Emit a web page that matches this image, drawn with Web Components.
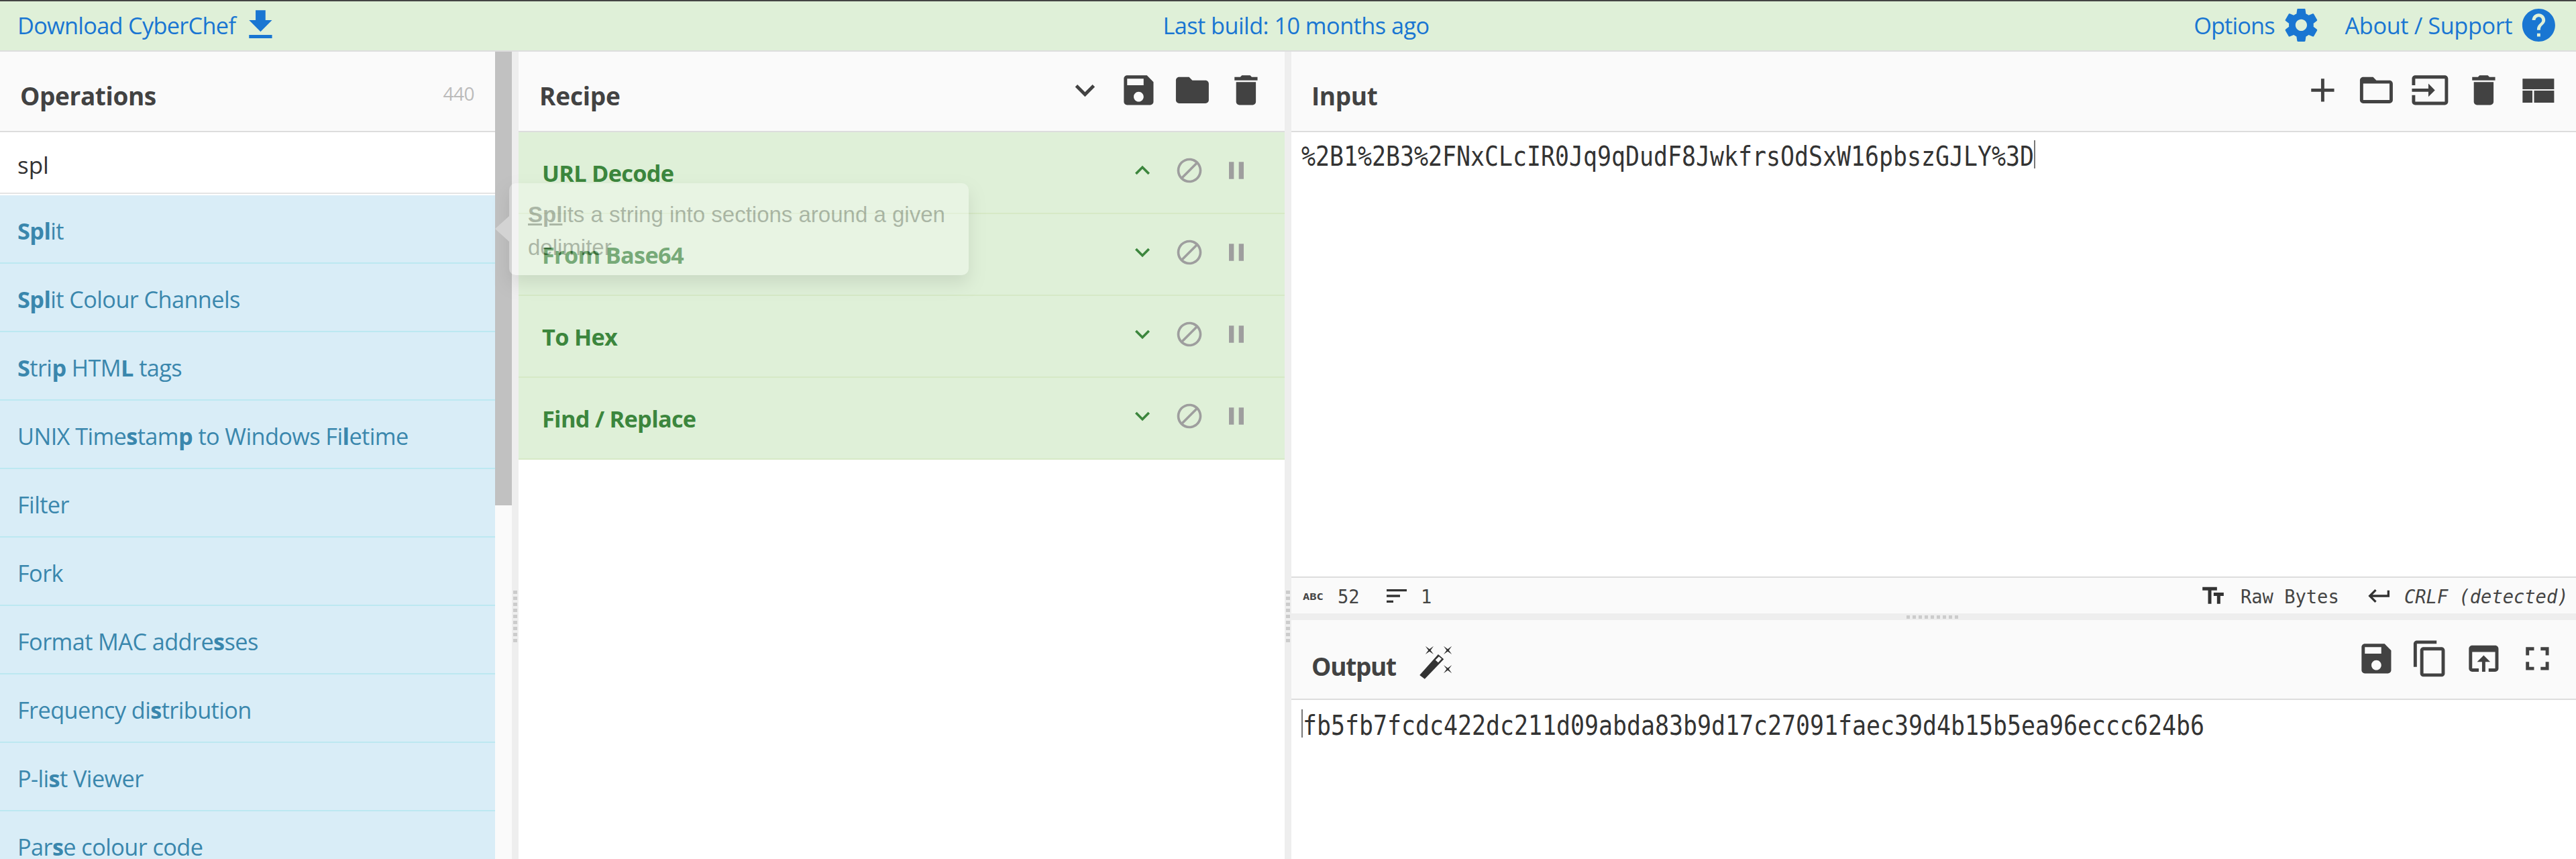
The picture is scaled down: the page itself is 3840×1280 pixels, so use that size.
<!DOCTYPE html>
<html lang="en">
<head>
<meta charset="utf-8">
<title>CyberChef</title>
<style>
  html, body { margin: 0; height: 100%; overflow: hidden; background: #fff; }
  body { font-family: "Open Sans", "Liberation Sans", sans-serif; }
</style>
</head>
<body>
<cc-app></cc-app>

<script>
// material icon paths, 24x24 viewbox
const ICONS = {
  download: "M19 9h-4V3H9v6H5l7 7 7-7zM5 18v2h14v-2H5z",
  settings: "M19.43 12.98c.04-.32.07-.64.07-.98s-.03-.66-.07-.98l2.11-1.65c.19-.15.24-.42.12-.64l-2-3.46c-.12-.22-.39-.3-.61-.22l-2.49 1c-.52-.4-1.08-.73-1.69-.98l-.38-2.65C14.46 2.18 14.25 2 14 2h-4c-.25 0-.46.18-.49.42l-.38 2.65c-.61.25-1.17.59-1.69.98l-2.49-1c-.23-.09-.49 0-.61.22l-2 3.46c-.13.22-.07.49.12.64l2.11 1.65c-.04.32-.07.65-.07.98s.03.66.07.98l-2.11 1.65c-.19.15-.24.42-.12.64l2 3.46c.12.22.39.3.61.22l2.49-1c.52.4 1.08.73 1.69.98l.38 2.65c.03.24.24.42.49.42h4c.25 0 .46-.18.49-.42l.38-2.65c.61-.25 1.17-.59 1.69-.98l2.49 1c.23.09.49 0 .61-.22l2-3.46c.12-.22.07-.49-.12-.64l-2.11-1.65zM12 15.5c-1.93 0-3.5-1.57-3.5-3.5s1.57-3.5 3.5-3.5 3.5 1.57 3.5 3.5-1.57 3.5-3.5 3.5z",
  help: "M12 2C6.48 2 2 6.48 2 12s4.48 10 10 10 10-4.48 10-10S17.52 2 12 2zm1 17h-2v-2h2v2zm2.07-7.75l-.9.92C13.45 12.9 13 13.5 13 15h-2v-.5c0-1.1.45-2.1 1.17-2.83l1.24-1.26c.37-.36.59-.86.59-1.41 0-1.1-.9-2-2-2s-2 .9-2 2H8c0-2.21 1.79-4 4-4s4 1.79 4 4c0 .88-.36 1.68-.93 2.25z",
  down: "M7.41 8.59 12 13.17l4.59-4.58L18 10l-6 6-6-6 1.41-1.41z",
  up: "M7.41 15.41 12 10.83l4.59 4.58L18 14l-6-6-6 6 1.41 1.41z",
  save: "M17 3H5c-1.11 0-2 .9-2 2v14c0 1.1.89 2 2 2h14c1.1 0 2-.9 2-2V7l-4-4zm-5 16c-1.66 0-3-1.34-3-3s1.34-3 3-3 3 1.34 3 3-1.34 3-3 3zm3-10H5V5h10v4z",
  folder: "M10 4H4c-1.1 0-1.99.9-1.99 2L2 18c0 1.1.9 2 2 2h16c1.1 0 2-.9 2-2V8c0-1.1-.9-2-2-2h-8l-2-2z",
  folderOpen: "M20 6h-8l-2-2H4c-1.1 0-1.99.9-1.99 2L2 18c0 1.1.9 2 2 2h16c1.1 0 2-.9 2-2V8c0-1.1-.9-2-2-2zm0 12H4V8h16v10z",
  trash: "M6 19c0 1.1.9 2 2 2h8c1.1 0 2-.9 2-2V7H6v12zM19 4h-3.5l-1-1h-5l-1 1H5v2h14V4z",
  block: "M12 2C6.48 2 2 6.48 2 12s4.48 10 10 10 10-4.48 10-10S17.52 2 12 2zM4 12c0-4.42 3.58-8 8-8 1.85 0 3.55.63 4.9 1.69L5.69 16.9C4.63 15.55 4 13.85 4 12zm8 8c-1.85 0-3.55-.63-4.9-1.69L18.31 7.1C19.37 8.45 20 10.15 20 12c0 4.42-3.58 8-8 8z",
  pause: "M6 19h4V5H6v14zm8-14v14h4V5h-4z",
  add: "M19 13h-6v6h-2v-6H5v-2h6V5h2v6h6v2z",
  input: "M21 3.01H3c-1.1 0-2 .9-2 2V9h2V4.99h18v14.03H3V15H1v4.01c0 1.1.9 1.98 2 1.98h18c1.1 0 2-.88 2-1.98v-14c0-1.11-.9-2-2-2zM11 16l4-4-4-4v3H1v2h10v3z",
  layout: "M3 5h19.2v6.4H3zM3 12.2h6v7.4H3zM10 12.2h12.2v7.4H10z",
  copy: "M16 1H4c-1.1 0-2 .9-2 2v14h2V3h12V1zm3 4H8c-1.1 0-2 .9-2 2v14c0 1.1.9 2 2 2h11c1.1 0 2-.9 2-2V7c0-1.1-.9-2-2-2zm0 16H8V7h11v14z",
  openIn: "M19 4H5c-1.11 0-2 .9-2 2v12c0 1.1.89 2 2 2h4v-2H5V8h14v10h-4v2h4c1.1 0 2-.9 2-2V6c0-1.1-.9-2-2-2zm-7 6l-4 4h3v6h2v-6h3l-4-4z",
  fullscreen: "M7 14H5v5h5v-2H7v-3zm-2-4h2V7h3V5H5v5zm12 7h-3v2h5v-5h-2v3zM14 5v2h3v3h2V5h-5z",
  sort: "M3 18h6v-2H3v2zM3 6v2h18V6H3zm0 7h12v-2H3v2z",
  textFields: "M2.5 4v3h5v12h3V7h5V4h-13zm19 5h-9v3h3v7h3v-7h3V9z",
  enter: "M19 7v4H5.83l3.58-3.59L8 6l-6 6 6 6 1.41-1.41L5.83 13H21V7z",
  // wand with a hollow tip and three sparks, traced from the reference
  wand: "M5.8 21.6 8.9 24 20.5 11.95 17.1 9zM15.4 12.4 17.55 10.3 19.2 11.7 17.1 14zM9.3 4 11.8 5.8 14.3 4 12.5 6.5 14.3 9 11.8 7.2 9.3 9 11.1 6.5zM20.4 4 22.9 5.8 25.4 4 23.6 6.5 25.4 9 22.9 7.2 20.4 9 22.2 6.5zM20.4 15.5 22.9 17.3 25.4 15.5 23.6 18 25.4 20.5 22.9 18.7 20.4 20.5 22.2 18z"
};

class CcIcon extends HTMLElement {
  connectedCallback() {
    const size = this.getAttribute("size") ?? "58.8";
    const d = ICONS[this.getAttribute("name")] ?? "";
    this.attachShadow({ mode: "open" }).innerHTML = `
      <style>
        :host { display: block; flex: none; width: ${size}px; height: ${size}px; color: var(--icon, #424242); }
        svg { display: block; width: 100%; height: 100%; fill: currentColor; overflow: visible; }
      </style>
      <svg viewBox="0 0 24 24" aria-hidden="true"><path d="${d}"/></svg>`;
  }
}
customElements.define("cc-icon", CcIcon);

// the editor font is narrower than anything installed, so squeeze DejaVu to the measured advance
class CcMono extends HTMLElement {
  connectedCallback() {
    const text = this.getAttribute("text") ?? "";
    const adv = +(this.getAttribute("adv") ?? 21);
    const size = +(this.getAttribute("size") ?? 41);
    const sx = adv / (size * 0.602);
    this.attachShadow({ mode: "open" }).innerHTML = `
      <style>
        :host { display: block; flex: none; width: ${text.length * adv}px; height: ${size * 1.2}px; }
        span {
          display: block; width: max-content; white-space: pre;
          font: ${this.hasAttribute("italic") ? "italic" : "normal"} ${this.hasAttribute("bold") ? 700 : 400} ${size}px/1.2 "DejaVu Sans Mono", monospace;
          transform: scaleX(${sx}); transform-origin: 0 0;
        }
      </style>
      <span>${text}</span>`;
  }
}
customElements.define("cc-mono", CcMono);

class CcBanner extends HTMLElement {
  connectedCallback() {
    this.attachShadow({ mode: "open" }).innerHTML = `
      <style>
        :host {
          display: grid; grid-template-columns: 1fr auto 1fr; align-items: center;
          box-sizing: border-box; height: 77px; padding: 0 26px 2px;
          background: #dff0d8; border-top: 2px solid #444; border-bottom: 2px solid #ddd;
          color: #1976d2; font-size: 34.3px; font-stretch: 92%; --icon: #1976d2;
        }
        div { display: flex; align-items: center; }
        .mid { margin-left: 24px; letter-spacing: -.56px; }
        .right { justify-content: flex-end; }
        .dl { letter-spacing: -.7px; }
        .opt { letter-spacing: -.85px; }
        .about { letter-spacing: -.4px; margin-left: 36px; }
        .a { margin-left: 10px; }
        .b { margin-left: 8px; }
      </style>
      <div><span class="dl">Download CyberChef</span><cc-icon class="b" name="download"></cc-icon></div>
      <div class="mid">Last build: 10 months ago</div>
      <div class="right">
        <span class="opt">Options</span><cc-icon class="a" name="settings"></cc-icon>
        <span class="about">About / Support</span><cc-icon class="a" name="help"></cc-icon>
      </div>`;
  }
}
customElements.define("cc-banner", CcBanner);

// title row shared by all the panes; action icons go in the "actions" slot
class CcTitle extends HTMLElement {
  connectedCallback() {
    this.attachShadow({ mode: "open" }).innerHTML = `
      <style>
        :host {
          display: flex; align-items: center; box-sizing: border-box; flex: none;
          height: var(--title-h, 120px); padding: 0 28px 2px 30px;
          background: #fafafa; border-bottom: 2px solid #ddd;
          color: #424242; font-size: 37px; font-weight: 700; font-stretch: 92%;
        }
        .label { margin-top: var(--label-shift, 14px); letter-spacing: var(--title-ls, -.4px); }
        .actions { margin-left: auto; display: flex; align-items: center; gap: 21.2px; margin-top: var(--icon-shift, -2px); }
      </style>
      <span class="label"><slot></slot></span><slot name="extra"></slot>
      <div class="actions"><slot name="actions"></slot></div>`;
  }
}
customElements.define("cc-title", CcTitle);

class CcOp extends HTMLElement {
  connectedCallback() {
    this.attachShadow({ mode: "open" }).innerHTML = `
      <style>
        :host {
          display: flex; align-items: center; box-sizing: border-box; flex: none;
          height: 102px; padding: 5px 26px 0;
          background: #d9edf7; border-bottom: 2px solid #bce8f1;
          color: #3a87ad; font-size: 34.3px; font-stretch: 92%; letter-spacing: -.6px; white-space: pre;
        }
      </style>
      <span><slot></slot></span>`;
  }
}
customElements.define("cc-op", CcOp);

class CcOperations extends HTMLElement {
  connectedCallback() {
    this.attachShadow({ mode: "open" }).innerHTML = `
      <style>
        :host { display: flex; flex: none; width: 763px; overflow: hidden; }
        .col { display: flex; flex-direction: column; width: 738px; flex: none; }
        .count { font-size: 28px; font-weight: 400; color: #bbb; margin: 10px 3px 0 0; letter-spacing: -.5px; }
        .search {
          flex: none; box-sizing: border-box; height: 94px; padding: 4px 26px 0;
          display: flex; align-items: center; background: #fff;
          border-bottom: 2px solid #fff; box-shadow: inset 0 -2px 0 #e4e4e4;
          font-size: 35px; font-stretch: 92%; color: #333;
        }
        .bar { flex: 1; background: #fafafa; }
        .thumb { height: 676px; background: #c1c1c1; }
      </style>
      <div class="col">
        <cc-title>Operations<span slot="actions" class="count">440</span></cc-title>
        <div class="search">spl</div>
        <cc-op><b>Spl</b>it</cc-op>
        <cc-op><b>Spl</b>it Colour Channels</cc-op>
        <cc-op><b>S</b>tri<b>p</b> HTM<b>L</b> tags</cc-op>
        <cc-op>UNIX Time<b>s</b>tam<b>p</b> to Windows Fi<b>l</b>etime</cc-op>
        <cc-op>Filter</cc-op>
        <cc-op>Fork</cc-op>
        <cc-op>Format MAC addre<b>s</b>ses</cc-op>
        <cc-op>Frequency di<b>s</b>tribution</cc-op>
        <cc-op>P-li<b>s</b>t Viewer</cc-op>
        <cc-op>Par<b>s</b>e colour code</cc-op>
      </div>
      <div class="bar"><div class="thumb"></div></div>`;
  }
}
customElements.define("cc-operations", CcOperations);

class CcRecipeItem extends HTMLElement {
  connectedCallback() {
    const arrow = this.hasAttribute("open") ? "up" : "down";
    this.attachShadow({ mode: "open" }).innerHTML = `
      <style>
        :host {
          display: flex; align-items: center; box-sizing: border-box; flex: none;
          height: 122px; padding: 0 50px 0 35px;
          background: #dff0d8; border-bottom: 2px solid #d6e9c6;
          color: #3c863d; font-size: 34.3px; font-weight: 700; font-stretch: 92%; letter-spacing: -.7px;
        }
        .icons { margin-left: auto; display: flex; gap: 26px; margin-top: -7px; --icon: #9e9e9e; }
        .arrow { --icon: #3c863d; }
      </style>
      <span><slot></slot></span>
      <div class="icons">
        <cc-icon class="arrow" size="44" name="${arrow}"></cc-icon>
        <cc-icon size="44" name="block"></cc-icon>
        <cc-icon size="44" name="pause"></cc-icon>
      </div>`;
  }
}
customElements.define("cc-recipe-item", CcRecipeItem);

class CcRecipe extends HTMLElement {
  connectedCallback() {
    this.attachShadow({ mode: "open" }).innerHTML = `
      <style>
        :host { display: flex; flex-direction: column; flex: none; width: 1142px; background: #fff; }
        cc-title { padding-right: 28px; padding-left: 31px; --title-ls: -.2px; }
      </style>
      <cc-title>Recipe
        <cc-icon slot="actions" name="down"></cc-icon>
        <cc-icon slot="actions" name="save"></cc-icon>
        <cc-icon slot="actions" name="folder"></cc-icon>
        <cc-icon slot="actions" name="trash"></cc-icon>
      </cc-title>
      <cc-recipe-item open>URL Decode</cc-recipe-item>
      <cc-recipe-item>From Base64</cc-recipe-item>
      <cc-recipe-item>To Hex</cc-recipe-item>
      <cc-recipe-item>Find / Replace</cc-recipe-item>`;
  }
}
customElements.define("cc-recipe", CcRecipe);

// code area with its caret, caret sits before or after the text
class CcEditor extends HTMLElement {
  connectedCallback() {
    const text = this.getAttribute("text") ?? "";
    const caret = `<i></i>`;
    const body = `<cc-mono text="${text}" adv="21" size="41"></cc-mono>`;
    this.attachShadow({ mode: "open" }).innerHTML = `
      <style>
        :host { display: block; flex: 1; min-height: 0; background: #fff; color: #333; padding: var(--edit-top, 14px) 0 0 15px; }
        div { display: flex; align-items: flex-start; }
        i { display: block; flex: none; width: 2px; height: 42px; background: #777; }
      </style>
      <div>${this.hasAttribute("caret-start") ? caret + body : body + caret}</div>`;
  }
}
customElements.define("cc-editor", CcEditor);

class CcStatus extends HTMLElement {
  connectedCallback() {
    this.attachShadow({ mode: "open" }).innerHTML = `
      <style>
        :host {
          display: flex; align-items: center; flex: none; box-sizing: border-box; height: 55px;
          padding: 0 12px 0 17px; background: #fafafa; border-top: 2px solid #ddd; color: #444; --icon: #333;
        }
        cc-mono { margin-top: 4px; }
        .abc { margin: 0 21px 0 0; position: relative; top: 2px; }
        .sort { margin-left: 36px; }
        .one { margin-left: 16px; }
        .raw { margin-left: 21px; }
        .enter { margin-left: 40px; }
        .eol { margin-left: 17px; }
        .push { margin-left: auto; }
      </style>
      <cc-mono class="abc" text="ABC" adv="10.3" size="14" bold></cc-mono>
      <cc-mono text="52" adv="16.3" size="29"></cc-mono>
      <cc-icon class="sort" size="40" name="sort"></cc-icon>
      <cc-mono class="one" text="1" adv="16.3" size="29"></cc-mono>
      <cc-icon class="push" size="40" name="textFields"></cc-icon>
      <cc-mono class="raw" text="Raw Bytes" adv="16.3" size="29"></cc-mono>
      <cc-icon class="enter" size="40" name="enter"></cc-icon>
      <cc-mono class="eol" text="CRLF (detected)" adv="16.3" size="29" italic></cc-mono>`;
  }
}
customElements.define("cc-status", CcStatus);

class CcIo extends HTMLElement {
  connectedCallback() {
    this.attachShadow({ mode: "open" }).innerHTML = `
      <style>
        :host { display: flex; flex-direction: column; flex: 1; min-width: 0; }
        .in { display: flex; flex-direction: column; flex: none; height: 837px; --edit-top: 12px; }
        .wand { margin-left: 21px; margin-top: 2px; --icon: #333; }
        .out { --title-h: 119px; --icon-shift: 0px; --label-shift: 22px; --title-ls: -1.3px; }
        .split {
          flex: none; height: 10px; background: #eee; display: flex; justify-content: center;
        }
        .split span {
          width: 78px; height: 5px; margin: 3px 0 0 0; position: relative; left: -2px;
          background: repeating-linear-gradient(90deg, #ccc 0 5px, transparent 5px 9px);
        }
      </style>
      <div class="in">
        <cc-title>Input
          <cc-icon slot="actions" name="add"></cc-icon>
          <cc-icon slot="actions" name="folderOpen"></cc-icon>
          <cc-icon slot="actions" name="input"></cc-icon>
          <cc-icon slot="actions" name="trash"></cc-icon>
          <cc-icon slot="actions" name="layout"></cc-icon>
        </cc-title>
        <cc-editor text="%2B1%2B3%2FNxCLcIR0Jq9qDudF8JwkfrsOdSxW16pbszGJLY%3D"></cc-editor>
        <cc-status></cc-status>
      </div>
      <div class="split"><span></span></div>
      <cc-title class="out">Output
        <cc-icon class="wand" slot="extra" name="wand"></cc-icon>
        <cc-icon slot="actions" name="save"></cc-icon>
        <cc-icon slot="actions" name="copy"></cc-icon>
        <cc-icon slot="actions" name="openIn"></cc-icon>
        <cc-icon slot="actions" name="fullscreen"></cc-icon>
      </cc-title>
      <cc-editor caret-start text="fb5fb7fcdc422dc211d09abda83b9d17c27091faec39d4b15b5ea96eccc624b6"></cc-editor>`;
  }
}
customElements.define("cc-io", CcIo);

class CcGutter extends HTMLElement {
  connectedCallback() {
    this.attachShadow({ mode: "open" }).innerHTML = `
      <style>
        :host { display: flex; align-items: center; flex: none; width: 10px; background: #eee; }
        span {
          display: block; width: 6px; height: 78px; margin: 0 0 0 2px; position: relative; top: 240px;
          background: repeating-linear-gradient(180deg, #ccc 0 5px, transparent 5px 9px);
        }
      </style>
      <span></span>`;
  }
}
customElements.define("cc-gutter", CcGutter);

// popover next to the hovered operation, mid fade-in in the reference
class CcPopover extends HTMLElement {
  connectedCallback() {
    this.attachShadow({ mode: "open" }).innerHTML = `
      <style>
        :host {
          position: absolute; left: 759px; top: 196px; width: 685px; height: 137px; box-sizing: border-box;
          padding: 22px 20px 0 28px; background: #fff; border-radius: 10px;
          box-shadow: 0 12px 24px rgba(0,0,0,.3); opacity: .3;
          font: 33px/49px "Liberation Sans", Arial, sans-serif; color: #333;
        }
        .arrow {
          position: absolute; left: -21px; top: 49px; width: 0; height: 0;
          border-style: solid; border-width: 19px 21px 19px 0; border-color: transparent #fff transparent transparent;
        }
      </style>
      <div class="arrow"></div>
      <slot></slot>`;
  }
}
customElements.define("cc-popover", CcPopover);

class CcApp extends HTMLElement {
  connectedCallback() {
    this.attachShadow({ mode: "open" }).innerHTML = `
      <style>
        :host { display: flex; flex-direction: column; height: 1280px; overflow: hidden; }
        .work { position: relative; display: flex; flex: 1; min-height: 0; }
      </style>
      <cc-banner></cc-banner>
      <div class="work">
        <cc-operations></cc-operations>
        <cc-gutter></cc-gutter>
        <cc-recipe></cc-recipe>
        <cc-gutter></cc-gutter>
        <cc-io></cc-io>
        <cc-popover><b><u>Spl</u></b>its a string into sections around a given delimiter</cc-popover>
      </div>`;
  }
}
customElements.define("cc-app", CcApp);
</script>
</body>
</html>
